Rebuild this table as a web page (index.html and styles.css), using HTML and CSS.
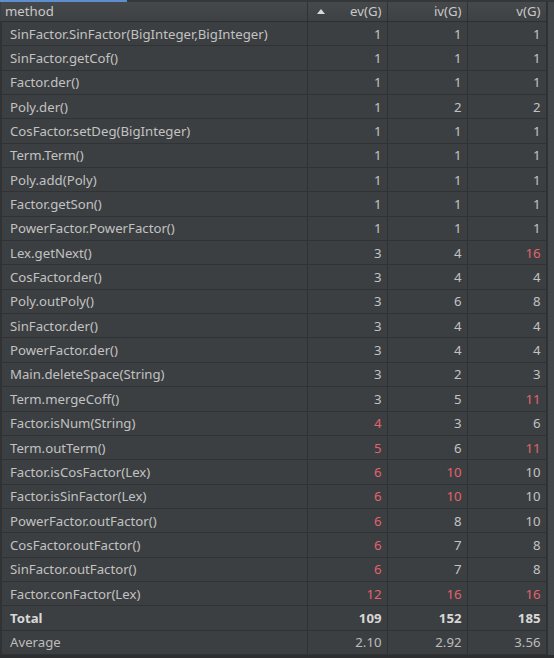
FILE: index.html
```html
<!DOCTYPE html>
<html>
<head>
<meta charset="utf-8">
<link rel="stylesheet" href="styles.css">
</head>
<body>
<div class="panel">
  <div class="topbar"><div class="tab-indicator"></div></div>
  <div class="table-wrap">
    <table class="metrics">
      <colgroup>
        <col class="c-method"><col class="c-num"><col class="c-num"><col class="c-num-last">
      </colgroup>
      <thead>
        <tr>
          <th class="h-method">method</th>
          <th class="h-num sorted"><span class="sort-arrow"></span>ev(G)</th>
          <th class="h-num">iv(G)</th>
          <th class="h-num">v(G)</th>
        </tr>
      </thead>
      <tbody>
        <tr><td class="name">SinFactor.SinFactor(BigInteger,BigInteger)</td><td>1</td><td>1</td><td>1</td></tr>
        <tr><td class="name">SinFactor.getCof()</td><td>1</td><td>1</td><td>1</td></tr>
        <tr><td class="name">Factor.der()</td><td>1</td><td>1</td><td>1</td></tr>
        <tr><td class="name">Poly.der()</td><td>1</td><td>2</td><td>2</td></tr>
        <tr><td class="name">CosFactor.setDeg(BigInteger)</td><td>1</td><td>1</td><td>1</td></tr>
        <tr><td class="name">Term.Term()</td><td>1</td><td>1</td><td>1</td></tr>
        <tr><td class="name">Poly.add(Poly)</td><td>1</td><td>1</td><td>1</td></tr>
        <tr><td class="name">Factor.getSon()</td><td>1</td><td>1</td><td>1</td></tr>
        <tr><td class="name">PowerFactor.PowerFactor()</td><td>1</td><td>1</td><td>1</td></tr>
        <tr><td class="name">Lex.getNext()</td><td>3</td><td>4</td><td class="warn">16</td></tr>
        <tr><td class="name">CosFactor.der()</td><td>3</td><td>4</td><td>4</td></tr>
        <tr><td class="name">Poly.outPoly()</td><td>3</td><td>6</td><td>8</td></tr>
        <tr><td class="name">SinFactor.der()</td><td>3</td><td>4</td><td>4</td></tr>
        <tr><td class="name">PowerFactor.der()</td><td>3</td><td>4</td><td>4</td></tr>
        <tr><td class="name">Main.deleteSpace(String)</td><td>3</td><td>2</td><td>3</td></tr>
        <tr><td class="name">Term.mergeCoff()</td><td>3</td><td>5</td><td class="warn">11</td></tr>
        <tr><td class="name">Factor.isNum(String)</td><td class="warn">4</td><td>3</td><td>6</td></tr>
        <tr><td class="name">Term.outTerm()</td><td class="warn">5</td><td>6</td><td class="warn">11</td></tr>
        <tr><td class="name">Factor.isCosFactor(Lex)</td><td class="warn">6</td><td class="warn">10</td><td>10</td></tr>
        <tr><td class="name">Factor.isSinFactor(Lex)</td><td class="warn">6</td><td class="warn">10</td><td>10</td></tr>
        <tr><td class="name">PowerFactor.outFactor()</td><td class="warn">6</td><td>8</td><td>10</td></tr>
        <tr><td class="name">CosFactor.outFactor()</td><td class="warn">6</td><td>7</td><td>8</td></tr>
        <tr><td class="name">SinFactor.outFactor()</td><td class="warn">6</td><td>7</td><td>8</td></tr>
        <tr><td class="name">Factor.conFactor(Lex)</td><td class="warn">12</td><td class="warn">16</td><td class="warn">16</td></tr>
        <tr class="total"><td class="name">Total</td><td>109</td><td>152</td><td>185</td></tr>
        <tr class="average"><td class="name">Average</td><td>2.10</td><td>2.92</td><td>3.56</td></tr>
      </tbody>
    </table>
    <div class="scrollbar"></div>
  </div>
</div>
</body>
</html>
```

FILE: styles.css
```css
html, body {
  margin: 0;
  padding: 0;
  background: #2c2e30;
}

.panel {
  width: 554px;
  height: 658px;
  overflow: hidden;
  background: #2c2e30;
  font-family: "Noto Sans", "Open Sans", sans-serif;
  font-size: 13.2px;
  color: #c2c2c2;
}

.topbar {
  height: 2px;
  background: #35383a;
}

.tab-indicator {
  width: 127px;
  height: 2px;
  background: #5d8fcf;
}

.table-wrap {
  display: flex;
}

.metrics {
  width: 545px;
  border-collapse: collapse;
  table-layout: fixed;
  background: #3c3f41;
}

.c-method { width: 306px; }
.c-num { width: 80px; }
.c-num-last { width: 79px; }

.metrics th {
  height: 19px;
  padding: 0 5px;
  font-weight: normal;
  color: #c8c8c8;
  background: linear-gradient(#46494b, #3e4143);
  border-right: 1px solid #2f3133;
  border-bottom: 1px solid #2c2e30;
  white-space: nowrap;
  line-height: 17px;
}

.h-method {
  text-align: left;
  padding-left: 4px !important;
}

.h-num {
  text-align: right;
}

.sorted {
  position: relative;
}

.sort-arrow {
  position: absolute;
  left: 9px;
  top: 7px;
  width: 0;
  height: 0;
  border-left: 4px solid transparent;
  border-right: 4px solid transparent;
  border-bottom: 5px solid #d8d8d8;
}

.metrics td {
  height: 24.17px;
  padding: 0 5px;
  text-align: right;
  border-right: 1px solid #2f3133;
  border-bottom: 1px solid #303234;
  white-space: nowrap;
  line-height: 18px;
  box-sizing: border-box;
}

.metrics td.name {
  text-align: left;
  padding-left: 8px;
  border-left: 2px solid #303234;
}

.metrics td.warn {
  color: #e2636b;
}

.total td {
  font-weight: bold;
  color: #d8d8d8;
}

.average td {
  color: #bcbcbc;
}

.scrollbar {
  width: 9px;
  height: 653px;
  background: #44474a;
  border-left: 1px solid #2f3133;
}
```
